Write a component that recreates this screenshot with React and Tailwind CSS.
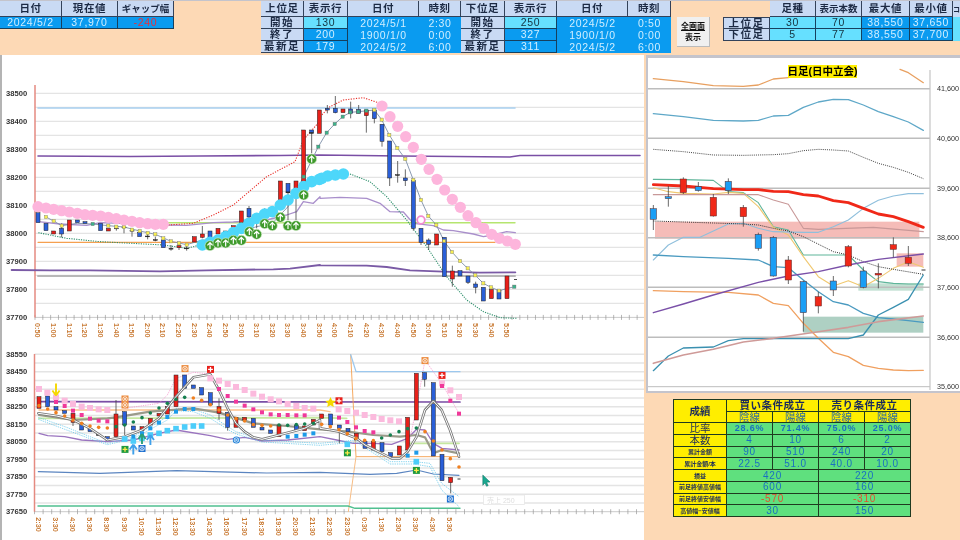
import React from "react";

const SANS = '"Liberation Sans", "Noto Sans CJK JP", sans-serif';
const up = (ox, oy, a) => a.map(([x, y]) => [ox + x / 3, oy + y / 3]);
const P = ({ pts, c, w = 1, dash, op }) => (
  <polyline points={pts.map((p) => p.join(",")).join(" ")} fill="none" stroke={c} strokeWidth={w} strokeDasharray={dash} strokeOpacity={op} strokeLinejoin="round" strokeLinecap={dash ? "butt" : "round"} />
);
const CC = { r: "#e8201a", b: "#2a5fd8", k: "#333333", g: "#1a9ef5", h: "#f02818" };
const Candle = ({ x, t, b, wt, wb, c, w = 4, bd = "#222" }) => (
  <g>
    {wt !== undefined && <line x1={x} x2={x} y1={wt} y2={wb} stroke="#444" strokeWidth="0.8" />}
    <rect x={x - w / 2} y={t} width={w} height={Math.max(b - t, 0.8)} fill={CC[c]} stroke={bd} strokeWidth="0.5" />
  </g>
);
const Candles = ({ data, ox, oy, w, bd }) =>
  data.map(([zx, t, b, wt, wb, c], i) => (
    <Candle key={i} x={ox + zx / 3} t={oy + t / 3} b={oy + b / 3} wt={wt === null ? undefined : oy + wt / 3} wb={oy + wb / 3} c={c} w={w} bd={bd} />
  ));
const Sq = ({ list, ox, oy, s, c, sc }) =>
  up(ox, oy, list).map(([x, y], i) => <rect key={i} x={x - s / 2} y={y - s / 2} width={s} height={s} fill={c} stroke={sc} strokeWidth={sc ? 0.4 : 0} />);
const Dots = ({ list, ox, oy, r, c }) => up(ox, oy, list).map(([x, y], i) => <circle key={i} cx={x} cy={y} r={r} fill={c} />);
const ArrowCircle = ({ x, y }) => (
  <g>
    <circle cx={x} cy={y} r="5" fill="#3f9a2c" stroke="#d8efd0" strokeWidth="0.6" />
    <path d={`M${x} ${y + 3.4}V${y - 2.8}M${x - 2.6} ${y - 0.3}L${x} ${y - 3}L${x + 2.6} ${y - 0.3}`} stroke="#fff" strokeWidth="1.2" fill="none" />
  </g>
);
const XSq = ({ x, y, c, round }) => (
  <g>
    {round ? <circle cx={x} cy={y} r="3.6" fill={c} /> : <rect x={x - 3.5} y={y - 3.5} width="7" height="7" fill={c} />}
    <circle cx={x} cy={y} r="2.3" fill="none" stroke="#fff" strokeWidth="0.7" />
    <path d={`M${x - 1.5} ${y - 1.5}L${x + 1.5} ${y + 1.5}M${x + 1.5} ${y - 1.5}L${x - 1.5} ${y + 1.5}`} stroke="#fff" strokeWidth="0.7" />
  </g>
);
const PlusSq = ({ x, y, c }) => (
  <g>
    <rect x={x - 3.5} y={y - 3.5} width="7" height="7" fill={c} />
    <path d={`M${x} ${y - 2.4}V${y + 2.4}M${x - 2.4} ${y}H${x + 2.4}`} stroke={c === "#1f9a40" ? "#ffe94a" : "#fff"} strokeWidth="1.3" />
  </g>
);
const BigArrow = ({ x, y, c, down }) => (
  <path
    d={down ? `M${x} ${y + 6}L${x - 3.6} ${y + 1}M${x} ${y + 6}L${x + 3.6} ${y + 1}M${x} ${y + 6}V${y - 6}` : `M${x} ${y - 5}L${x - 3.6} ${y}M${x} ${y - 5}L${x + 3.6} ${y}M${x} ${y - 5}V${y + 5}`}
    stroke={c}
    strokeWidth="1.9"
    fill="none"
  />
);

const mainLabels = ["0:50","1:00","1:10","1:20","1:30","1:40","1:50","2:00","2:10","2:20","2:30","2:40","2:50","3:00","3:10","3:20","3:30","3:40","3:50","4:00","4:10","4:20","4:30","4:40","4:50","5:00","5:10","5:20","5:30","5:40","5:50"];
const subLabels = ["2:30","3:30","4:30","5:30","8:30","9:30","10:30","11:30","12:30","13:30","14:30","16:30","17:30","18:30","19:30","20:30","21:30","22:30","23:30","0:30","1:30","2:30","3:30","4:30","5:30"];

const Axis = ({ x0, top, bottom, grids, prices, ticks, tickStep, labels, labelStart, labelStep }) => (
  <g fontFamily={SANS}>
    {grids.map((y, i) => <line key={i} x1={x0} x2="644" y1={y} y2={y} stroke="#e4e4e4" strokeWidth="1.4" />)}
    <line x1={x0} x2="644" y1={bottom} y2={bottom} stroke="#bcbcbc" strokeWidth="0.8" />
    {Array.from({ length: ticks }, (_, i) => (
      <line key={i} x1={x0 + i * tickStep} x2={x0 + i * tickStep} y1={bottom - 2.5} y2={bottom + 2.5} stroke="#999" strokeWidth="0.7" />
    ))}
    <line x1={x0} x2={x0} y1={top} y2={bottom} stroke="#e58a80" strokeWidth="1.5" />
    {prices.map(([t, y]) => (
      <text key={t} x="6" y={y + 2.6} fontSize="7.6" fontWeight="700" fill="#333">{t}</text>
    ))}
    {labels.map((t, i) => (
      <text key={i} transform={`translate(${labelStart + i * labelStep - 2.6},${bottom + 5.5}) rotate(90)`} fontSize="7.3" fontWeight="700" fill="#c97b35">{t}</text>
    ))}
  </g>
);

const mainCandles3 = [
  [114,398,428,null,0,"b"],[138,430,452,null,0,"b"],[161,453,462,null,0,"r"],[185,445,462,430,472,"b"],[208,420,453,null,0,"r"],[232,420,428,null,0,"b"],[255,425,430,null,0,"b"],
  [302,430,452,null,0,"b"],[325,445,453,null,0,"r"],[349,444,446,438,452,"k"],[372,441,443,436,460,"k"],[396,451,453,445,470,"k"],[419,457,470,null,0,"b"],[443,468,470,460,478,"k"],[466,479,481,470,484,"k"],[490,480,503,null,0,"b"],[513,505,506,495,512,"k"],[537,497,503,485,510,"r"],[560,504,506,490,512,"k"],
  [583,470,486,null,0,"r"],[607,462,472,438,475,"r"],[630,453,472,null,0,"b"],[654,445,462,null,0,"r"],[677,453,456,null,0,"k"],[700,437,442,null,0,"r"],[724,393,427,null,0,"r"],[747,385,411,378,416,"b"],[770,415,417,400,445,"k"],[794,390,392,385,405,"k"],[841,303,362,null,0,"r"],[864,310,336,null,0,"b"],[864,336,337,336,420,"k"],[888,303,330,null,0,"r"],[888,330,331,330,420,"k"],[911,150,310,null,0,"r"],[935,150,158,null,0,"b"],[935,158,159,158,220,"k"],[958,90,160,null,0,"r"],
];
const mainCandles4 = [
  [22,85,90,75,100,"b"],[46,85,98,48,100,"b"],[69,87,98,null,0,"r"],[92,87,100,65,115,"b"],[116,88,100,75,100,"b"],[139,90,107,90,158,"r"],[163,90,116,88,130,"b"],[186,133,184,133,200,"b"],[209,183,294,183,318,"b"],[233,284,286,243,308,"k"],[256,294,302,268,318,"b"],[280,302,445,302,452,"b"],[303,445,487,445,495,"b"],[326,480,493,475,510,"b"],[350,462,495,null,0,"r"],[373,472,590,null,0,"b"],[397,573,597,557,620,"r"],[420,572,588,null,0,"b"],[444,588,607,588,612,"b"],[467,612,622,605,640,"b"],[490,622,663,null,0,"b"],[514,628,656,null,0,"r"],[537,630,657,null,0,"b"],[561,588,656,null,0,"r"],
];
const pink3 = [[114,380],[138,384],[161,388],[185,392],[208,396],[232,400],[255,404],[278,406],[302,408],[325,412],[349,416],[372,420],[396,424],[419,428],[443,431],[466,433],[490,433]];
const pink4 = [[186,78],[210,110],[233,139],[257,170],[280,202],[304,238],[327,268],[351,298],[374,330],[397,358],[421,382],[444,407],[468,428],[491,445],[515,463],[538,475],[562,483],[586,493]];
const cyan3 = [[607,495],[630,487],[654,480],[677,470],[700,458],[724,445],[747,430],[770,415],[794,402],[817,395],[841,375],[864,360],[888,340],[911,320],[935,305],[958,298]];
const cyan4 = [[5,295],[23,288],[46,285],[70,282]];
const arrows = [[630,497],[654,489],[677,489],[700,481],[724,481],[748,455],[770,463],[794,431],[817,437],[841,412],[864,437],[888,437],[911,345],[935,237]];
const yel3 = [[138,411],[161,423],[185,437],[325,437],[349,440],[372,441],[396,449],[419,453],[443,459],[466,463],[490,475],[513,484],[537,490],[560,494]];
const grn3 = [[278,432],[911,290],[955,200]];
const grn4 = [[20,158],[44,132],[68,110],[91,97],[115,95],[139,92],[583,620]];
const yel4 = [[163,90],[185,119],[208,165],[232,204],[256,237],[280,300],[303,360],[325,408],[349,435],[372,483],[396,516],[420,543],[443,565],[466,586],[490,610],[513,622],[537,632]];

const MainChart = () => (
  <svg className="block w-[642px] h-[285px]" viewBox="2 55 642 285">
    <Axis x0={35} top={85} bottom={317.4}
      grids={Array.from({ length: 16 }, (_, i) => 93.4 + 14 * i)}
      prices={[38500,38400,38300,38200,38100,38000,37900,37800,37700].map((p, i) => [p, 93.4 + 28 * i])}
      ticks={78} tickStep={7.82} labels={mainLabels} labelStart={38} labelStep={15.63} />
    <P pts={[[38,108],[515,108]]} c="#a8d0f0" w={1.6} />
    <P pts={[[38,276],[515,276]]} c="#b8b8b8" w={2} />
    <P pts={[[168,222.7],[515,222.7]]} c="#b5e56f" w={1.4} />
    <P pts={[[38,242.3],[495,242.3]]} c="#f5a050" w={1.2} />
    <P pts={[[38,156],[130,156.5],[200,156],[280,155.5],[320,155],[400,156],[510,157],[520,155.5],[640,155.5]]} c="#7a4fa5" w={1.6} />
    <P pts={[...up(0,80,[[35,570],[150,571],[270,571],[480,574],[620,571],[820,568],[870,566],[960,555]]), ...up(320,80,[[0,556],[140,557],[200,561],[270,571],[370,575],[480,578],[586,577]])]} c="#7a5aa5" w={1.9} />
    <P pts={[...up(0,80,[[115,425],[180,432],[260,436],[300,428],[500,435],[560,436],[640,428],[700,426],[800,420],[860,405],[890,395],[910,365],[940,370],[960,350]]), ...up(320,80,[[0,355],[60,352],[140,355],[180,370],[210,395],[250,396],[280,430],[340,437],[370,450],[400,452],[460,462],[490,470],[520,465],[560,455],[586,458]])]} c="#a98fcb" w={1.3} />
    <P pts={up(0,80,[[505,435],[580,430],[640,405],[700,375],[800,290],[885,245],[910,180],[958,125]]).concat(up(320,80,[[0,110],[30,80],[70,60],[130,53],[180,70]]))} c="#e8302a" w={1.1} dash="1.2 1.4" />
    <P pts={up(0,80,[[115,458],[200,475],[300,485],[490,495],[560,505],[600,495]])} c="#2d8f6b" w={1.1} dash="1.2 1.2" />
    <P pts={up(320,80,[[90,282],[150,305],[200,350],[260,420],[320,500],[380,590],[440,660],[490,695],[540,713],[590,715]])} c="#2d8f6b" w={1.1} dash="1.2 1.2" />
    <P pts={up(0,80,[[138,411],[161,423],[185,437],[232,430],[278,432],[325,437],[372,441],[419,453],[466,463],[513,484],[560,494],[607,480],[630,480],[770,440],[817,430],[864,380],[911,290],[955,200]]).concat(up(320,80,[[20,158],[44,132],[68,110],[91,97],[115,95],[163,90],...yel4.slice(1),[583,620]]))} c="#7d8ea8" w={0.9} />
    <Candles data={mainCandles3} ox={0} oy={80} />
    <Candles data={mainCandles4} ox={320} oy={80} />
    <path d="M514 279.5h3" stroke="#333" strokeWidth="0.9" />
    <Sq list={yel3} ox={0} oy={80} s={3.2} c="#f7ee50" sc="#777" />
    <Sq list={yel4} ox={320} oy={80} s={3.2} c="#f7ee50" sc="#777" />
    <Sq list={grn3} ox={0} oy={80} s={3.2} c="#3bb38a" sc="#666" />
    <Sq list={grn4} ox={320} oy={80} s={3.2} c="#3bb38a" sc="#666" />
    <Dots list={pink3} ox={0} oy={80} r={5.6} c="#fdb5dc" />
    <Dots list={pink4} ox={320} oy={80} r={5.6} c="#fdb5dc" />
    <Dots list={cyan3} ox={0} oy={80} r={5.8} c="#4dd7fa" />
    <Dots list={cyan4} ox={320} oy={80} r={5.8} c="#4dd7fa" />
    {up(0,80,arrows).map(([x,y],i) => <ArrowCircle key={i} x={x} y={y} />)}
    <circle cx="421" cy="220" r="3.8" fill="#fff" stroke="#f38ad0" strokeWidth="1.8" />
  </svg>
);

const subC5 = [
  [117,170,205,null,0,"r"],[143,168,200,null,0,"b"],[168,200,210,null,0,"b"],[194,212,220,null,0,"b"],[219,220,247,220,258,"r"],[245,250,270,null,0,"b"],[270,265,275,null,0,"b"],[296,284,286,null,0,"k"],[322,290,300,null,0,"b"],[348,222,290,180,290,"r"],[374,215,255,215,285,"b"],[400,258,270,null,0,"b"],[426,260,272,null,0,"r"],[451,235,255,null,0,"r"],[477,220,228,null,0,"r"],[502,200,222,null,0,"r"],[528,105,200,null,0,"r"],[554,105,145,null,0,"b"],[580,135,145,null,0,"b"],[605,143,165,null,0,"b"],[631,158,195,null,0,"b"],[657,200,220,175,240,"r"],[683,217,262,217,272,"b"],[708,232,262,null,0,"r"],[734,232,240,null,0,"r"],[760,235,262,null,0,"b"],[786,262,270,null,0,"b"],[812,270,280,null,0,"b"],[837,255,290,null,0,"r"],[889,255,270,null,0,"b"],[914,258,272,null,0,"r"],[940,238,255,null,0,"r"],
];
const subC6 = [
  [5,222,235,null,0,"r"],[32,222,255,null,0,"b"],[58,255,265,255,310,"b"],[84,265,275,null,0,"b"],[109,280,300,null,0,"r"],[135,305,325,null,0,"b"],[160,305,330,null,0,"r"],[186,308,335,null,0,"b"],[212,338,350,null,0,"b"],[238,318,345,null,0,"r"],[263,232,330,null,0,"r"],[289,100,240,null,0,"r"],[314,98,118,98,140,"b"],[340,128,348,null,0,"b"],[366,343,422,null,0,"b"],[392,412,428,412,460,"r"],
];
const wave = up(0,340,[[115,220],[170,228],[220,240],[270,265],[322,300],[374,290],[426,270],[477,235],[528,170],[580,112],[631,103],[657,150],[683,205],[708,250],[734,275],[760,292],[786,298],[837,285],[914,265],[960,240]]).concat(up(320,340,[[0,265],[32,270],[58,275],[84,285],[110,295],[135,315],[185,340],[215,355],[240,355],[263,335],[290,290],[315,210],[340,183],[365,210],[390,270],[417,350]]));
const SubChart = () => (
  <svg className="block w-[642px] h-[200px]" viewBox="2 340 642 200">
    <Axis x0={34.5} top={354} bottom={511.7}
      grids={Array.from({ length: 18 }, (_, i) => 354.3 + 8.75 * i)}
      prices={[38550,38450,38350,38250,38150,38050,37950,37850,37750,37650].map((p, i) => [p, 354 + 17.5 * i])}
      ticks={71} tickStep={8.6} labels={subLabels} labelStart={38.4} labelStep={17.15} />
    <P pts={[[38,401.7],[460,402]]} c="#7a4fa5" w={1.7} />
    <P pts={up(0,340,[[117,210],[960,210]]).concat(up(320,340,[[30,215]]))} c="#fbc08a" w={1.4} />
    <P pts={up(320,340,[[92,44],[108,350],[417,350]])} c="#f5a050" w={0.9} />
    <P pts={up(320,340,[[108,350],[85,515]])} c="#f7bd85" w={1} />
    <P pts={up(320,340,[[92,44],[108,95],[420,95]])} c="#9cc8ee" w={1.3} />
    <P pts={up(0,340,[[117,235],[960,233]]).concat(up(320,340,[[80,235]]))} c="#c5e8a0" w={1.8} />
    <P pts={up(320,340,[[260,310],[417,310]])} c="#c5e8a0" w={1.8} />
    <P pts={up(0,340,[[115,395],[300,400],[530,392],[800,399],[960,397]]).concat(up(320,340,[[150,403],[230,400],[290,390],[340,402],[417,406]]))} c="#5b85c0" w={1.2} />
    <P pts={[[38,506],[348,506],[355,508.3],[460,508.3]]} c="#50c090" w={1.4} />
    <P pts={up(0,340,[[117,280],[143,287],[194,290],[245,300],[322,305],[400,300],[477,280],[528,270],[631,287],[683,298],[734,292],[786,303],[863,300],[960,290]]).concat(up(320,340,[[50,300],[100,310],[160,310],[215,313],[263,295],[290,268],[315,270],[340,310],[366,325],[417,330]]))} c="#9a74bf" w={1.3} />
    <P pts={up(0,340,[[115,232],[200,262],[270,290],[322,310],[400,290],[502,230],[528,205],[580,208],[631,225],[683,260],[708,275],[786,300],[960,310]]).concat(up(320,340,[[110,300],[210,365],[280,365],[330,370],[365,430],[417,470]]))} c="#58c3e8" w={0.7} dash="1.3 1" />
    <P pts={up(0,340,[[115,238],[200,270],[270,296],[322,314],[400,296],[502,240],[528,212],[580,215],[631,235],[683,268],[708,282],[786,306],[960,316]]).concat(up(320,340,[[110,306],[210,372],[280,372],[330,380],[365,450],[417,500]]))} c="#58c3e8" w={0.7} dash="1.3 1" />
    <P pts={up(0,340,[[374,205],[477,190],[502,165],[528,115],[580,97],[631,102]])} c="#f78ac8" w={0.7} dash="1.3 1" />
    <P pts={up(320,340,[[263,330],[290,200],[315,60],[365,130],[417,220]])} c="#f78ac8" w={0.7} dash="1.3 1" />
    <P pts={up(0,340,[[117,225],[219,240],[322,235],[348,232],[450,215],[580,205],[657,218],[760,250],[860,258],[960,268]]).concat(up(320,340,[[85,275],[160,285],[240,290],[290,285],[315,292],[340,340],[366,330],[417,340]]))} c="#9a9a8a" w={2.2} />
    <Candles data={subC5} ox={0} oy={340} />
    <Candles data={subC6} ox={320} oy={340} />
    <path d="M457.5 479h3" stroke="#222" strokeWidth="0.9" />
    <P pts={wave} c="#777" w={2.6} />
    <P pts={wave} c="#fff" w={1} />
    <Sq list={[[117,147],[142,158],[168,172],[194,182],[219,192],[245,200],[270,204],[296,208],[322,210],[631,115],[657,122],[683,132],[708,141],[734,150],[760,161],[786,170],[812,178],[837,184],[863,192],[889,198],[914,204],[940,206]]} ox={0} oy={340} s={6} c="#fbbadd" />
    <Sq list={[[56,208],[82,213],[108,218],[134,225],[160,231],[185,237],[211,241],[237,244],[366,130],[391,151],[417,171]]} ox={320} oy={340} s={6} c="#fbbadd" />
    <Sq list={[[168,186],[194,198],[219,212],[245,225],[270,236],[296,242],[322,244],[657,147],[683,168],[708,185],[734,197],[760,208],[786,217],[812,223],[837,225],[863,225],[889,226],[914,226]]} ox={0} oy={340} s={4} c="#f0389a" />
    <Sq list={[[57,233],[82,246],[108,262],[134,273],[160,277],[366,138],[391,182],[417,221]]} ox={320} oy={340} s={4} c="#f0389a" />
    <Dots list={[[117,197],[143,207],[168,218],[194,228],[219,240],[245,250],[270,258],[296,262],[322,264],[580,174],[605,181],[631,194],[657,210],[683,225],[708,236],[734,243],[760,254],[786,256],[812,258]]} ox={0} oy={340} r={1.8} c="#f08020" />
    <Dots list={[[5,253],[31,260],[57,269],[82,281],[108,295],[134,301],[160,302],[315,275],[340,303],[366,330],[391,356],[417,381]]} ox={320} oy={340} r={1.8} c="#f08020" />
    <Dots list={[[348,260],[374,255],[400,246],[426,233],[451,219],[477,204],[502,190],[528,178],[554,172],[837,255],[863,256],[889,254],[914,252],[940,250]]} ox={0} oy={340} r={1.8} c="#158050" />
    <Dots list={[[185,294],[211,285],[237,275],[263,266],[289,264]]} ox={320} oy={340} r={1.8} c="#158050" />
    <Sq list={[[374,297],[400,303],[426,295],[451,285],[477,280],[502,272],[528,266],[554,261],[580,258],[605,258]]} ox={0} oy={340} s={5.6} c="#4ccdfa" />
    <Sq list={[[82,313],[289,365]]} ox={320} oy={340} s={5.6} c="#4ccdfa" />
    <Sq list={[[400,290],[426,280],[451,265],[477,248],[502,231],[528,215],[554,207],[580,207],[863,290],[889,288],[914,284],[940,280]]} ox={0} oy={340} s={4} c="#1c9ae8" />
    <Sq list={[[263,347],[289,338]]} ox={320} oy={340} s={4} c="#1c9ae8" />
    <BigArrow x={56} y={389.5} c="#f5d800" down />
    <XSq x={125} y={399} c="#ec8a3c" />
    <XSq x={125} y={405} c="#ec8a3c" />
    <XSq x={185} y={368.6} c="#ec8a3c" />
    <PlusSq x={210.5} y={369.4} c="#e8201a" />
    <PlusSq x={125} y={449.4} c="#1f9a40" />
    <BigArrow x={133.3} y={449.5} c="#3fa0ea" />
    <XSq x={142} y={448.5} c="#1c6fd0" />
    <BigArrow x={142} y={439} c="#2aa07a" />
    <BigArrow x={150.4} y={440} c="#3fa0ea" />
    <XSq x={236.4} y={440} c="#1c7fd8" round />
    <PlusSq x={339} y={400.8} c="#e8201a" />
    <path d="M330.5 397l1.6 3.4 3.6.5-2.6 2.5.7 3.6-3.3-1.8-3.3 1.8.7-3.6-2.6-2.5 3.6-.5z" fill="#f5d800" />
    <PlusSq x={347.4} y={452.8} c="#1f9a40" />
    <XSq x={425} y={360.6} c="#ec8a3c" />
    <PlusSq x={442} y={375.4} c="#e8201a" />
    <PlusSq x={416.4} y={470.4} c="#1f9a40" />
    <XSq x={450.4} y={499} c="#1c6fd0" />
    <path d="M482.8 475l7.2 7-3.4.2 1.6 3.4-1.6.7-1.7-3.3-2.1 2.3z" fill="#19a98f" stroke="#0c6a60" strokeWidth="0.5" />
    <rect x="483.5" y="495" width="41" height="9.5" fill="#fff" stroke="#e6e6e6" strokeWidth="0.8" />
    <text x="487" y="502.5" fontSize="7" fill="#dedede" fontFamily={SANS}>売上 250</text>
  </svg>
);

const dz = (a) => up(640, 50, a);
const ez = (a) => up(640, 220, a);
const rightCandles7 = [
  [40,476,508,465,540,"g"],[85,440,446,408,470,"g"],[130,387,428,382,432,"h"],[175,410,422,396,425,"g"],[220,442,498,432,500,"h"],[265,394,422,385,432,"g"],[310,472,500,465,530,"h"],
];
const rightCandles8 = [
  [355,43,85,38,92,"g"],[400,52,168,48,170,"g"],[445,120,180,108,192,"h"],[490,185,278,182,335,"g"],[535,230,258,215,280,"h"],[580,183,210,168,228,"g"],[625,80,138,75,142,"h"],[670,153,202,140,205,"g"],[715,160,165,130,205,"h"],[760,74,88,52,112,"h"],[805,112,130,78,138,"h"],
];
const DayChart = () => (
  <svg className="block w-[312px] h-[333px]" viewBox="648 58 312 333" fontFamily={SANS}>
    <rect x={640+45/3} y={50+515/3} width={793/3} height={48/3+1} fill="#f5bcb8" />
    <rect x={640+770/3} y={220+100/3} width={80/3} height={40/3} fill="#f5bcb8" />
    <rect x={640+655/3} y={220+190/3} width={195/3} height={22/3} fill="#c2e0d2" />
    <rect x={640+490/3} y={220+290/3} width={360/3} height={48/3} fill="#aed0c3" />
    {[88.7,138.3,188.3,237.7,287.3,337.3,386.7].map((y,i) => (
      <g key={y}>
        <line x1="646" x2="930" y1={y} y2={y} stroke="#bdbdbd" strokeWidth={i===6?1:1.4} />
        <text x="937" y={y+2.6} fontSize="7.2" fill="#333">{["41,600","40,600","39,600","38,600","37,600","36,600","35,600"][i]}</text>
      </g>
    ))}
    <line x1="930" x2="930" y1="70" y2="390" stroke="#c4c4c4" strokeWidth="1.2" />
    <P pts={dz([[40,86],[130,95],[220,107],[310,109],[355,105],[400,87],[445,83]])} c="#e8a060" w={1.3} />
    <P pts={dz([[780,58],[805,68],[850,98]])} c="#e8a060" w={1.3} />
    <P pts={dz([[40,191],[130,200],[220,211],[310,213],[355,211],[400,198],[445,196],[490,172],[535,156],[580,148],[625,149],[670,165],[715,185],[760,200],[805,216],[850,241]])} c="#5fa8c8" w={1.3} />
    <P pts={dz([[40,298],[130,305],[220,315],[310,316],[400,314],[445,311],[490,302],[535,298],[580,300],[625,303],[670,322],[715,340],[760,352],[805,367],[850,386]])} c="#444" w={1} dash="1 1.1" />
    <P pts={dz([[40,388],[130,389],[220,391],[265,425],[310,428],[355,458],[400,530],[445,540],[490,615],[625,615],[670,660],[715,695],[760,700],[805,702],[850,702]])} c="#5fb59a" w={1.1} />
    <P pts={dz([[40,413],[85,425],[130,430],[220,432],[265,427],[310,430],[355,470],[400,532],[445,555],[490,620],[535,680],[580,708],[625,692],[670,710],[715,685],[760,655],[805,635],[850,652]])} c="#f0c870" w={1.1} />
    <P pts={dz([[40,434],[355,434],[400,450],[445,463],[490,535],[535,538],[700,532],[850,545]])} c="#c89898" w={1.1} />
    <P pts={ez([[40,120],[85,75],[130,52],[180,52],[265,12],[310,10],[355,25],[400,35],[490,37],[535,37],[580,20],[625,0],[670,-35],[715,-59],[760,-72],[805,-79],[850,-79]])} c="#8fbfdc" w={1.1} />
    <P pts={ez([[40,3],[310,12],[355,15],[400,25],[445,33],[490,50],[580,95],[625,105],[670,125],[715,140],[760,148],[850,163]])} c="#333" w={1} dash="1 1.1" />
    <P pts={ez([[40,105],[130,110],[265,115],[355,120],[400,140],[445,143],[490,180],[535,215],[580,245],[625,255],[670,280],[715,293],[760,297],[805,302],[850,307]])} c="#4a9ac0" w={1.3} />
    <P pts={ez([[40,212],[130,215],[265,217],[355,225],[400,250],[445,257],[490,310],[535,355],[580,397],[625,410],[670,436],[715,445],[760,450],[805,452],[850,451]])} c="#f0a060" w={1.3} />
    <P pts={ez([[40,452],[85,408],[130,384],[220,381],[265,362],[310,356],[580,356],[625,356],[670,345],[715,285],[760,262],[805,238],[850,165]])} c="#3a90b0" w={1.3} />
    <P pts={ez([[40,430],[130,405],[220,388],[310,366],[400,355],[535,335],[625,322],[715,305],[850,288]])} c="#cf9a98" w={1.6} />
    <P pts={ez([[40,278],[130,252],[220,225],[355,187],[445,168],[535,155],[625,135],[715,118],[850,102]])} c="#7a50a8" w={1.4} />
    <P pts={dz([[40,404],[130,408],[220,416],[310,419],[355,419],[400,424],[445,425],[490,434],[535,438],[580,452],[625,458],[670,475],[715,492],[760,500],[805,515],[850,532]])} c="#f02818" w={2.8} />
    <Candles data={rightCandles7} ox={640} oy={50} w={6.4} bd="#5a2a2a" />
    <Candles data={rightCandles8} ox={640} oy={220} w={6.4} bd="#5a2a2a" />
    <path d="M921.5 270h4" stroke="#333" strokeWidth="1" />
  </svg>
);

const hd = "flex items-center justify-center whitespace-nowrap bg-[#c9daf4] text-[#1c2a44] font-bold tracking-[0.6px] border-r border-b border-[#33425a]";
const hdS = "flex items-center justify-center whitespace-nowrap bg-[#c9daf4] text-[#1c2a44] font-bold text-[9.5px] border-r border-b border-[#33425a]";
const lab = "flex items-center justify-center whitespace-nowrap bg-[#c9daf4] text-[#1c2a44] font-bold tracking-[1.5px] border-r border-b border-[#33425a]";
const blue = "flex items-center justify-center bg-[#0a9bf0] text-[#cfeeff] tracking-[0.7px] border-r border-b border-[#16405e]";
const blueN = "flex items-center justify-center bg-[#0a9bf0] text-[#cfeeff] tracking-[0.7px]";
const cyan = "flex items-center justify-center bg-[#66e0ff] text-[#14323f] tracking-[0.7px] border-r border-b border-[#16405e]";

const Stat = ({ className, children }) => <div className={`flex items-center justify-center whitespace-nowrap ${className}`}>{children}</div>;
const yel = "bg-[#ffee00] text-[#1a2a5c] font-bold";
const grn = "bg-[#5fe07e] text-[#1a70c0] tracking-[0.8px]";

export default function App() {
  return (
    <div className="w-[960px] h-[540px] overflow-hidden bg-[#fdd9b5] blur-[0.4px] font-['Liberation_Sans','Noto_Sans_CJK_JP',sans-serif]">
      <div className="h-[55px] flex items-start border-t border-[#c4c4cc] text-[10.5px] leading-none">
        <div className="grid grid-cols-[62px_56px_56px] grid-rows-[16px_12px] w-[174px] text-[10.5px]">
          <div className={hd}>日付</div><div className={hd}>現在値</div><div className={hdS}>ギャップ幅</div>
          <div className={blue}>2024/5/2</div><div className={blue}>37,970</div><div className={`${blue} text-[#e8303a]`}>-240</div>
        </div>
        <div className="ml-[87px] grid grid-cols-[43px_44px_71px_42px] grid-rows-[16px_12px_12px_12px] w-[200px]">
          <div className={hd}>上位足</div><div className={hd}>表示行</div><div className={hd}>日付</div><div className={hd}>時刻</div>
          <div className={lab}>開始</div><div className={cyan}>130</div><div className={blueN}>2024/5/1</div><div className={blueN}>2:30</div>
          <div className={lab}>終了</div><div className={blue}>200</div><div className={blueN}>1900/1/0</div><div className={blueN}>0:00</div>
          <div className={lab}>最新足</div><div className={blue}>179</div><div className={blueN}>2024/5/2</div><div className={blueN}>6:00</div>
        </div>
        <div className="grid grid-cols-[44px_52px_71px_43px] grid-rows-[16px_12px_12px_12px] w-[210px]">
          <div className={hd}>下位足</div><div className={hd}>表示行</div><div className={hd}>日付</div><div className={hd}>時刻</div>
          <div className={lab}>開始</div><div className={cyan}>250</div><div className={blueN}>2024/5/2</div><div className={blueN}>0:50</div>
          <div className={lab}>終了</div><div className={blue}>327</div><div className={blueN}>1900/1/0</div><div className={blueN}>0:00</div>
          <div className={lab}>最新足</div><div className={blue}>311</div><div className={blueN}>2024/5/2</div><div className={blueN}>6:00</div>
        </div>
        <div className="ml-[6px] mt-[16px] w-[33px] h-[30px] bg-[#f0f0f0] flex flex-col items-center justify-center text-[8px] font-bold text-[#111] leading-[11px] border-r border-b border-[#bbbbbb]">
          <span className="underline">全画面</span><span>表示</span>
        </div>
        <div className="ml-[13px] grid grid-cols-[47px_46px_46px_48px_43px_7px] grid-rows-[16px_12px_12px] w-[237px]">
          <div className="bg-[#fdd9b5]"></div><div className={hd}>足種</div><div className={hdS}>表示本数</div><div className={hd}>最大値</div><div className={hd}>最小値</div><div className="bg-[#c9daf4] text-[#1c2a44] text-[7px] font-bold overflow-hidden flex items-center">コ</div>
          <div className={`${lab} border-t border-l`}>上位足</div><div className={cyan}>30</div><div className={cyan}>70</div><div className={blue}>38,550</div><div className={blue}>37,650</div><div className="bg-[#66e0ff]"></div>
          <div className={`${lab} border-l`}>下位足</div><div className={cyan}>5</div><div className={cyan}>77</div><div className={blue}>38,550</div><div className={blue}>37,700</div><div className="bg-[#66e0ff]"></div>
        </div>
      </div>
      <div className="flex h-[485px]">
        <div className="w-[644px] bg-white border-l-2 border-[#b4b4b4]">
          <MainChart />
          <SubChart />
        </div>
        <div className="w-[316px] pl-[2px]">
          <div className="relative w-[314px] h-[338px] bg-white border-t-[3px] border-l-[2px] border-b-[2px] border-[#c4c4cc] overflow-hidden">
            <div className="absolute left-[140px] top-[7px] w-[69px] h-[13px] bg-[#ffee00] text-black text-[10.5px] font-bold flex items-center justify-center whitespace-nowrap">日足(日中立会)</div>
            <DayChart />
          </div>
          <div className="ml-[27px] mt-[6px] w-[238px] h-[118px] grid grid-cols-[52px_repeat(4,1fr)] grid-rows-10 gap-px bg-[#1f3a20] border border-[#1f3a20] text-[10px] leading-none">
            <Stat className={`${yel} row-span-2 text-[10.5px]`}>成績</Stat>
            <Stat className={`${yel} col-span-2 text-[10.5px] tracking-[0.5px]`}>買い条件成立</Stat>
            <Stat className={`${yel} col-span-2 text-[10.5px] tracking-[0.5px]`}>売り条件成立</Stat>
            <Stat className={`${yel} font-normal text-[10.5px] text-[#2a6aa0]`}>陰線</Stat><Stat className={`${yel} font-normal text-[10.5px] text-[#2a6aa0]`}>陽線</Stat><Stat className={`${yel} font-normal text-[10.5px] text-[#2a6aa0]`}>陰線</Stat><Stat className={`${yel} font-normal text-[10.5px] text-[#2a6aa0]`}>陽線</Stat>
            <Stat className={`${yel} font-normal text-[10.5px]`}>比率</Stat><Stat className={`${grn} font-bold text-[9px]`}>28.6%</Stat><Stat className={`${grn} font-bold text-[9px]`}>71.4%</Stat><Stat className={`${grn} font-bold text-[9px]`}>75.0%</Stat><Stat className={`${grn} font-bold text-[9px]`}>25.0%</Stat>
            <Stat className={`${yel} font-normal text-[10.5px]`}>本数</Stat><Stat className={grn}>4</Stat><Stat className={grn}>10</Stat><Stat className={grn}>6</Stat><Stat className={grn}>2</Stat>
            <Stat className={`${yel} text-[6px]`}>累計金額</Stat><Stat className={grn}>90</Stat><Stat className={grn}>510</Stat><Stat className={grn}>240</Stat><Stat className={grn}>20</Stat>
            <Stat className={`${yel} text-[6px]`}>累計金額/本</Stat><Stat className={grn}>22.5</Stat><Stat className={grn}>51.0</Stat><Stat className={grn}>40.0</Stat><Stat className={grn}>10.0</Stat>
            <Stat className={`${yel} text-[6px]`}>損益</Stat><Stat className={`${grn} col-span-2`}>420</Stat><Stat className={`${grn} col-span-2`}>220</Stat>
            <Stat className={`${yel} text-[6px]`}>前足終値高値幅</Stat><Stat className={`${grn} col-span-2`}>600</Stat><Stat className={`${grn} col-span-2`}>160</Stat>
            <Stat className={`${yel} text-[6px]`}>前足終値安値幅</Stat><Stat className={`${grn} col-span-2 text-[#e05030]`}>-570</Stat><Stat className={`${grn} col-span-2 text-[#e05030]`}>-310</Stat>
            <Stat className={`${yel} text-[6px]`}>高値幅−安値幅</Stat><Stat className={`${grn} col-span-2`}>30</Stat><Stat className={`${grn} col-span-2`}>150</Stat>
          </div>
        </div>
      </div>
    </div>
  );
}
